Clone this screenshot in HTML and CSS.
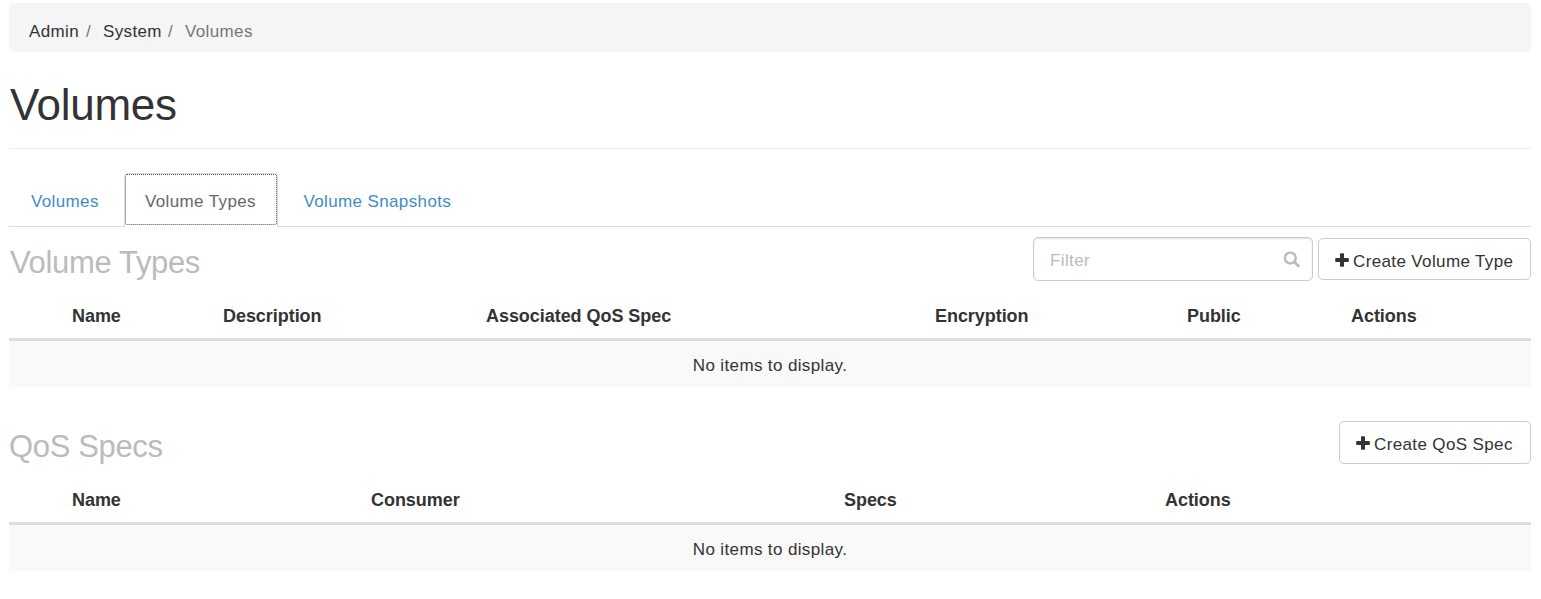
FILE: index.html
```html
<!DOCTYPE html>
<html lang="en">
<head>
<meta charset="utf-8">
<title>Volumes</title>
<link rel="stylesheet" href="styles.css">
</head>
<body>
<ol class="breadcrumb">
  <li class="crumb crumb-admin"><a>Admin</a></li>
  <li class="sep">/</li>
  <li class="crumb crumb-system"><a>System</a></li>
  <li class="sep">/</li>
  <li class="crumb active">Volumes</li>
</ol>
<header class="page-header"><h1>Volumes</h1></header>
<nav class="tabs">
  <a class="tab tab-volumes">Volumes</a>
  <a class="tab tab-types selected"><span class="focus-ring">Volume Types</span></a>
  <a class="tab tab-snapshots">Volume Snapshots</a>
</nav>
<section class="panel">
  <div class="toolbar">
    <h2 class="types-title">Volume Types</h2>
    <div class="actions">
      <div class="filter"><span>Filter</span>
        <svg class="search" viewBox="0 0 17 17"><circle cx="7.3" cy="7" r="5.4" fill="none" stroke="currentColor" stroke-width="2.4"/><path d="M11.3 11l4.1 4.1" stroke="currentColor" stroke-width="2.8" stroke-linecap="round"/></svg>
      </div>
      <button class="btn btn-type"><svg class="plus" viewBox="0 0 14 14"><path d="M5 1q0-.8.8-.8h2.4q.8 0 .8.8v4h4q.8 0 .8.8v2.4q0 .8-.8.8H9v4q0 .8-.8.8H5.8q-.8 0-.8-.8V9H1q-.8 0-.8-.8V5.8q0-.8.8-.8h4z" fill="currentColor"/></svg><span>Create Volume Type</span></button>
    </div>
  </div>
  <table>
    <colgroup><col class="w50"><col class="w151"><col class="w263"><col class="w449"><col class="w252"><col class="w164"><col></colgroup>
    <thead><tr><th></th><th>Name</th><th>Description</th><th>Associated QoS Spec</th><th>Encryption</th><th>Public</th><th>Actions</th></tr></thead>
    <tbody><tr><td colspan="7">No items to display.</td></tr></tbody>
  </table>
</section>
<section class="panel panel-qos">
  <div class="toolbar">
    <h2 class="qos-title">QoS Specs</h2>
    <div class="actions">
      <button class="btn btn-qos"><svg class="plus" viewBox="0 0 14 14"><path d="M5 1q0-.8.8-.8h2.4q.8 0 .8.8v4h4q.8 0 .8.8v2.4q0 .8-.8.8H9v4q0 .8-.8.8H5.8q-.8 0-.8-.8V9H1q-.8 0-.8-.8V5.8q0-.8.8-.8h4z" fill="currentColor"/></svg><span>Create QoS Spec</span></button>
    </div>
  </div>
  <table>
    <colgroup><col class="w50"><col class="w299"><col class="w473"><col class="w321"><col></colgroup>
    <thead><tr><th></th><th>Name</th><th>Consumer</th><th>Specs</th><th>Actions</th></tr></thead>
    <tbody><tr><td colspan="5">No items to display.</td></tr></tbody>
  </table>
</section>
</body>
</html>
```
FILE: styles.css
```css
* { box-sizing: border-box; }
body {
  margin: 0;
  padding: 3px 10px 0 9px;
  background: #fff;
  color: #333;
  font: 17px/24px "Liberation Sans", Arial, sans-serif;
  letter-spacing: 0.37px;
  white-space: nowrap;
}
h1, h2 { margin: 0; font-weight: 400; }
.breadcrumb {
  display: flex;
  height: 49px;
  margin: 0;
  padding: 17px 20px 0;
  list-style: none;
  background: #f5f5f5;
  border-radius: 5px;
}
.crumb-admin { width: 57px; }
.crumb-system { width: 65px; }
.sep { width: 17px; color: #777; }
.active { color: #777; }
.page-header {
  height: 97px;
  padding: 27px 0 0 1px;
  border-bottom: 1px solid #eee;
}
h1 { font-size: 44px; line-height: 52px; letter-spacing: -0.3px; }
.tabs {
  display: flex;
  height: 54px;
  margin-top: 24px;
  border-bottom: 1px solid #ddd;
}
.tab { height: 53px; padding-top: 17px; color: #428bca; }
.tab-volumes { width: 115px; padding-left: 22px; }
.tab-types { width: 154px; }
.tab-snapshots { padding-left: 25.5px; }
.selected {
  height: 54px;
  padding: 0;
  background: #fff;
  border: 1px solid #ddd;
  border-bottom: 0;
  border-radius: 5px 5px 0 0;
  color: #666;
}
.focus-ring {
  display: block;
  height: 51px;
  padding: 15px 0 0 19px;
  border: 1px dotted #555;
  border-radius: 2px;
}
.toolbar {
  display: flex;
  justify-content: space-between;
  height: 65px;
  padding-top: 10px;
}
h2 { padding-top: 8px; color: #bbb; font-size: 31px; line-height: 36px; letter-spacing: -0.35px; }
.types-title { padding-left: 1px; }
.actions { display: flex; gap: 5px; }
.filter {
  display: flex;
  justify-content: space-between;
  width: 280px;
  height: 44px;
  padding: 11px 12px 0 16px;
  border: 1px solid #ccc;
  border-radius: 5px;
  box-shadow: inset 0 1px 2px rgba(0, 0, 0, 0.12);
  color: #bbb;
}
.search { width: 17px; height: 17px; margin-top: 2px; }
.btn {
  display: flex;
  height: 42px;
  margin-top: 1px;
  padding: 11px 0 0 16px;
  background: #fff;
  border: 1px solid #ccc;
  border-radius: 5px;
  color: #333;
  font: inherit;
  letter-spacing: inherit;
}
.btn-type { width: 213px; }
.btn-qos { width: 192px; height: 43px; margin-top: 0; }
.plus { width: 14px; height: 14px; margin: 3px 4px 0 0; }
table {
  width: 1522px;
  table-layout: fixed;
  border-collapse: separate;
  border-spacing: 0;
}
th {
  height: 49px;
  padding: 2px 12px 0 13px;
  border-bottom: 3px solid #ddd;
  font-size: 18px;
  letter-spacing: -0.05px;
  text-align: left;
}
td { height: 46px; padding: 3px 0 0; background: #f9f9f9; text-align: center; }
.w50 { width: 50px; }
.w151 { width: 151px; }
.w263 { width: 263px; }
.w449 { width: 449px; }
.w252 { width: 252px; }
.w164 { width: 164px; }
.w299 { width: 299px; }
.w473 { width: 473px; }
.w321 { width: 321px; }
.panel-qos { margin-top: 24px; }
```
